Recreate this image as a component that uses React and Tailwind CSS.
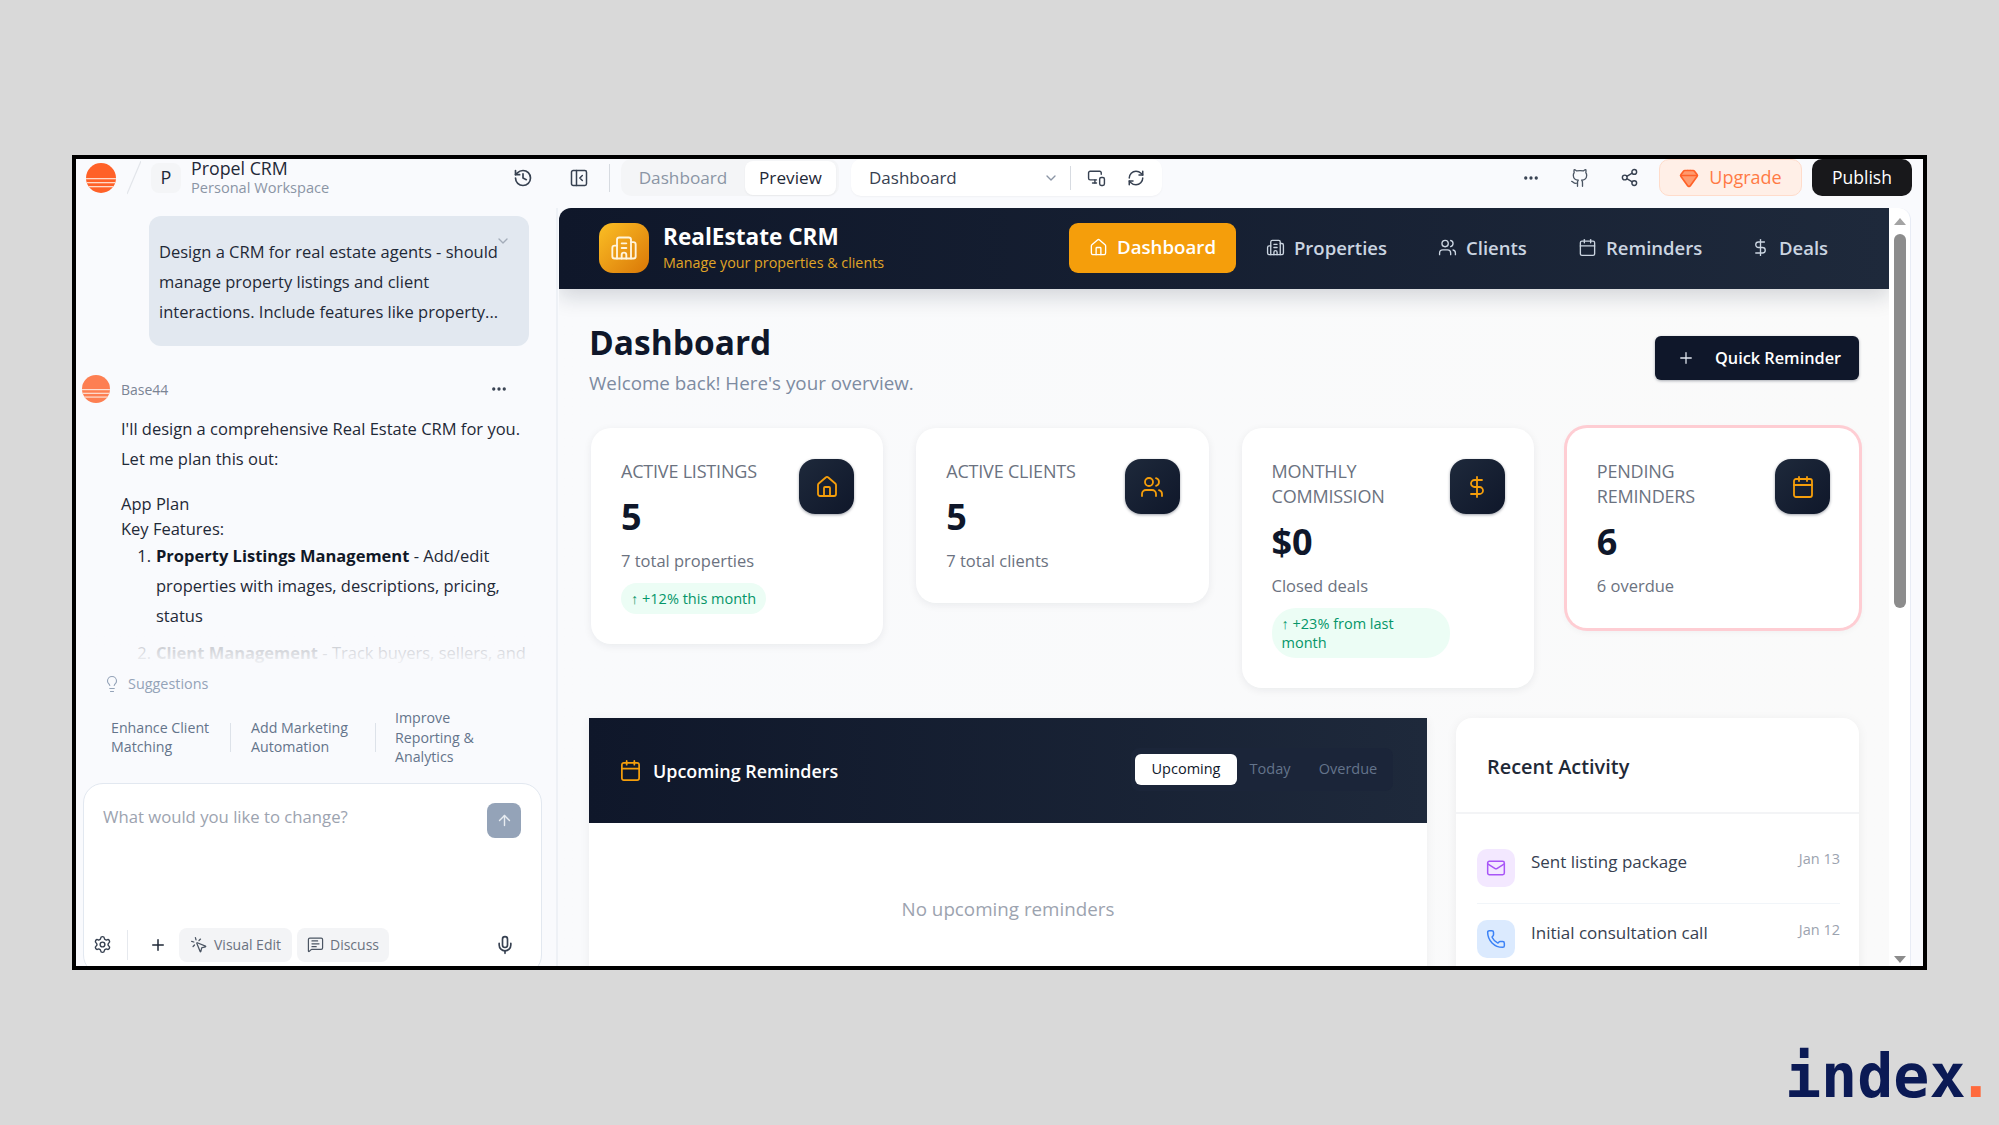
import React from "react";
import {
  History, PanelLeftClose, ChevronDown, MonitorSmartphone, RefreshCw, Ellipsis, Github, Share2, Gem,
  Building2, House, Users, Calendar, DollarSign, Plus, Mail, Phone, Lightbulb, ArrowUp, Settings,
  MousePointerClick, MessageSquareText, Mic,
} from "lucide-react";

function Sun({ size, id, className = "" }) {
  return (
    <svg width={size} height={size} viewBox="0 0 30 30" className={className}>
      <defs>
        <clipPath id={id}><circle cx="15" cy="15" r="15" /></clipPath>
      </defs>
      <g clipPath={`url(#${id})`}>
        <rect width="30" height="30" fill="#ff6128" />
        <rect y="15" width="30" height="1.3" fill="#ffd9c8" />
        <rect y="19" width="30" height="1.3" fill="#ffd9c8" />
        <rect y="23" width="30" height="1.3" fill="#ffd9c8" />
      </g>
    </svg>
  );
}

function StatCard({ label, value, sub, badge, Icon, alert }) {
  return (
    <div className={`bg-white rounded-[20px] pt-[31px] pb-[30px] pl-[30px] pr-[29px] flex shadow-[0_2px_8px_rgba(15,23,42,0.07)] ${alert ? "ring-[3px] ring-[#fecdd3]" : ""}`}>
      <div className="flex-1 min-w-0">
        <div className="text-[18px] leading-[25px] font-normal uppercase tracking-[-0.2px] text-[#6b7280] pr-[2px]">{label}</div>
        <div className="mt-[13px] text-[36px] leading-[40px] font-bold text-[#0f172a]">{value}</div>
        <div className="mt-[12px] text-[16.5px] leading-[24px] text-[#6b7280]">{sub}</div>
        {badge && (
          <div className="mt-[10px] inline-block bg-[#ecfdf5] text-[#059669] text-[14.5px] leading-[19px] px-[10px] py-[6px] rounded-[24px]">
            ↑ {badge}
          </div>
        )}
      </div>
      <div className="w-[55px] h-[55px] shrink-0 rounded-2xl bg-gradient-to-br from-[#1e293b] to-[#0f172a] flex items-center justify-center shadow-[0_1px_3px_rgba(15,23,42,0.4)]">
        <Icon size={24} strokeWidth={1.8} className="text-[#f59e0b]" />
      </div>
    </div>
  );
}

function NavItem({ Icon, label, w }) {
  return (
    <div className={`flex items-center gap-[9px] text-[#cbd5e1] text-[18.5px] font-semibold ${w}`}>
      <Icon size={19} strokeWidth={1.7} />
      <span>{label}</span>
    </div>
  );
}

function Activity({ Icon, title, date, box, fg, border }) {
  return (
    <div className={`flex items-start pb-[16px] mb-[16px] ${border ? "border-b border-[#f1f5f9]" : ""}`}>
      <div className={`w-[38px] h-[38px] rounded-[10px] flex items-center justify-center shrink-0 ${box}`}>
        <Icon size={20} strokeWidth={1.8} className={fg} />
      </div>
      <div className="ml-[16px] flex-1 text-[17px] leading-[26px] font-medium text-[#374151]">{title}</div>
      <div className="text-[14.5px] leading-[20px] text-[#9ca3af]">{date}</div>
    </div>
  );
}

export default function App() {
  return (
    <div className="w-[1999px] h-[1125px] bg-[#d9d9d9] overflow-hidden pt-[155px] font-['Open_Sans',sans-serif]">
      <div className="ml-[72px] w-[1855px] h-[815px] border-4 border-black bg-[#f9fafd] flex flex-col overflow-hidden">
        {/* top bar */}
        <header className="h-[49px] shrink-0 pb-[12px] flex items-center">
          <div className="w-[457px] pl-[10px] flex items-center shrink-0">
            <Sun size={30} id="sunA" />
            <svg width="14" height="34" viewBox="0 0 14 34" className="ml-[11px]"><path d="M14 0 L0 33" stroke="#e2e5ea" strokeWidth="1.2" /></svg>
            <div className="ml-[10px] w-[30px] h-[30px] rounded-lg bg-[#f4f5f7] flex items-center justify-center text-[18px] text-[#1f2937]">P</div>
            <div className="ml-[10px] flex-1">
              <div className="text-[17.8px] leading-[19px] font-medium text-[#1f2937]">Propel CRM</div>
              <div className="text-[14.6px] leading-[18px] text-[#8b95a5]">Personal Workspace</div>
            </div>
            <History size={20} strokeWidth={2} className="text-[#374151]" />
          </div>
          <PanelLeftClose size={20} strokeWidth={1.8} className="ml-[36px] text-[#374151]" />
          <div className="ml-[20px] w-px h-[28px] bg-[#d7dbe1]" />
          <div className="ml-[11px] w-[218px] h-[37px] rounded-[10px] bg-[#f4f5f7] flex items-center">
            <div className="w-[124px] text-center text-[17.2px] text-[#8b95a5]">Dashboard</div>
            <div className="w-[91px] h-[34px] rounded-lg bg-white flex items-center justify-center text-[17.2px] text-[#1f2937] shadow-[0_1px_2px_rgba(0,0,0,0.05)]">Preview</div>
          </div>
          <div className="ml-[12px] w-[311px] h-[37px] rounded-[10px] bg-white flex items-center pl-[18px] shadow-[0_1px_2px_rgba(0,0,0,0.04)]">
            <span className="w-[174px] text-[17px] text-[#374151]">Dashboard</span>
            <ChevronDown size={16} className="text-[#8b95a5]" />
            <div className="ml-[11px] w-px h-[24px] bg-[#d7dbe1]" />
            <MonitorSmartphone size={19} strokeWidth={1.8} className="ml-[16px] text-[#374151]" />
            <RefreshCw size={18} strokeWidth={2} className="ml-[21px] text-[#374151]" />
          </div>
          <div className="ml-auto flex items-center pr-[11px]">
            <Ellipsis size={18} strokeWidth={2.4} className="text-[#374151]" />
            <Github size={20} strokeWidth={1.6} className="ml-[30px] text-[#4b5563]" />
            <Share2 size={19} strokeWidth={1.8} className="ml-[30px] text-[#374151]" />
            <div className="ml-[20px] w-[143px] h-[37px] rounded-[10px] bg-[#ffefe7] border border-[#ffdccb] flex items-center justify-center gap-[10px] text-[#ff7a45] text-[18px]">
              <Gem size={20} strokeWidth={2} className="text-[#ff6128] fill-[#ff9a6e]" />
              <span>Upgrade</span>
            </div>
            <div className="ml-[10px] w-[100px] h-[37px] rounded-[10px] bg-[#18181b] flex items-center justify-center text-white text-[17.5px] font-medium">Publish</div>
          </div>
        </header>

        <div className="flex flex-1 min-h-0">
          {/* chat */}
          <aside className="w-[482px] shrink-0 border-r-2 border-[#eef1f6] flex flex-col overflow-hidden">
            <div className="relative h-[460px] shrink-0 overflow-hidden">
              <div className="relative ml-[73px] mt-[8px] w-[380px] h-[130px] rounded-xl bg-[#e2e8f0] pl-[10px] pr-[22px] pt-[21px] text-[16.5px] leading-[30px] text-[#1f2937]">
                Design a CRM for real estate agents - should manage property listings and client interactions. Include features like property...
                <ChevronDown size={16} className="absolute right-[18px] top-[17px] text-[#a3acb9]" />
              </div>
              <div className="mt-[29px] pl-[6px] pr-[48px] flex items-center">
                <Sun size={28} id="sunB" className="opacity-80" />
                <span className="ml-[11px] text-[14px] text-[#7b8494]">Base44</span>
                <Ellipsis size={18} strokeWidth={2.4} className="ml-auto text-[#374151]" />
              </div>
              <div className="mt-[11px] pl-[45px] pr-[30px] text-[16.5px] text-[#1f2937]">
                <p className="leading-[30px]">I'll design a comprehensive Real Estate CRM for you. Let me plan this out:</p>
                <p className="mt-[17px] leading-[25px]">App Plan</p>
                <p className="leading-[25px]">Key Features:</p>
                <ol className="leading-[30px]">
                  <li className="flex">
                    <span className="w-[35px] text-right pr-[5px]">1.</span>
                    <span className="flex-1"><b className="font-bold text-[#111827]">Property Listings Management</b> - Add/edit properties with images, descriptions, pricing, status</span>
                  </li>
                  <li className="flex mt-[7px]">
                    <span className="w-[35px] text-right pr-[5px]">2.</span>
                    <span className="flex-1"><b className="font-bold text-[#111827]">Client Management</b> - Track buyers, sellers, and</span>
                  </li>
                </ol>
              </div>
              <div className="absolute left-0 right-0 bottom-0 h-[44px] bg-gradient-to-b from-transparent via-[#f9fafd]/80 to-[#f9fafd]" />
            </div>

            <div className="mt-[6px] pl-[27px] flex items-center text-[14.4px] leading-[20px] text-[#94a3b8]">
              <Lightbulb size={18} strokeWidth={1.5} />
              <span className="ml-[7px]">Suggestions</span>
            </div>
            <div className="mt-[14px] pl-[35px] flex items-center text-[14.2px] leading-[19.5px] text-[#64748b] h-[60px]">
              <div className="w-[119px]">Enhance Client<br />Matching</div>
              <div className="w-px h-[29px] bg-[#dde2e9]" />
              <div className="ml-[20px] w-[124px]">Add Marketing<br />Automation</div>
              <div className="w-px h-[29px] bg-[#dde2e9]" />
              <div className="ml-[19px]">Improve<br />Reporting &amp;<br />Analytics</div>
            </div>
            <div className="mt-[16px] ml-[7px] w-[459px] h-[192px] shrink-0 rounded-[20px] bg-white border border-[#e2e8f0] px-[20px] pt-[19px]">
              <div className="flex items-start">
                <div className="flex-1 -ml-[1px] text-[16.7px] leading-[28px] text-[#9ca3af]">What would you like to change?</div>
                <div className="w-[34px] h-[35px] rounded-lg bg-[#94a3b8] flex items-center justify-center">
                  <ArrowUp size={17} strokeWidth={2} className="text-[#e8ecf1]" />
                </div>
              </div>
              <div className="mt-[90px] -ml-[11px] mr-[6px] flex items-center">
                <Settings size={19} strokeWidth={1.8} className="text-[#374151]" />
                <div className="ml-[15px] w-px h-[30px] bg-[#e6e9ee]" />
                <Plus size={18} strokeWidth={2} className="ml-[21px] text-[#1f2937]" />
                <div className="ml-[12px] w-[113px] h-[34px] rounded-lg bg-[#f3f4f6] flex items-center justify-center gap-[6px] text-[14px] text-[#6b7280]">
                  <MousePointerClick size={18} strokeWidth={1.7} className="text-[#4b5563]" />
                  <span>Visual Edit</span>
                </div>
                <div className="ml-[5px] w-[92px] h-[34px] rounded-lg bg-[#f3f4f6] flex items-center justify-center gap-[6px] text-[14px] text-[#6b7280]">
                  <MessageSquareText size={17} strokeWidth={1.7} className="text-[#4b5563]" />
                  <span>Discuss</span>
                </div>
                <Mic size={20} strokeWidth={2} className="ml-auto text-[#374151]" />
              </div>
            </div>
          </aside>

          {/* preview */}
          <main className="flex-1 min-w-0 mr-[12px] ml-px flex overflow-hidden rounded-tl-xl">
            <div className="flex-1 min-w-0 bg-gradient-to-r from-[#f9fafc] to-[#fafafa] overflow-hidden">
              <nav className="h-[81px] pb-[2px] bg-gradient-to-r from-[#0f172a] to-[#1e293b] flex items-center pl-[40px] shadow-[0_8px_20px_rgba(15,23,42,0.16)] relative">
                <div className="w-[50px] h-[50px] rounded-[14px] bg-gradient-to-br from-[#fbbf24] to-[#d97706] flex items-center justify-center">
                  <Building2 size={28} strokeWidth={1.6} className="text-[#fff4dc]" />
                </div>
                <div className="ml-[14px] w-[406px]">
                  <div className="text-[22.6px] leading-[29px] font-bold text-white">RealEstate CRM</div>
                  <div className="mt-[1px] text-[14.3px] leading-[22px] text-[#e0a526]">Manage your properties &amp; clients</div>
                </div>
                <div className="w-[167px] h-[50px] rounded-[9px] bg-[#f59e0b] flex items-center justify-center gap-[9px] text-white text-[18.7px] font-semibold">
                  <House size={19} strokeWidth={1.7} />
                  <span>Dashboard</span>
                </div>
                <NavItem Icon={Building2} label="Properties" w="ml-[30px] w-[172px]" />
                <NavItem Icon={Users} label="Clients" w="w-[140px]" />
                <NavItem Icon={Calendar} label="Reminders" w="w-[173px]" />
                <NavItem Icon={DollarSign} label="Deals" />
              </nav>

              <div className="pt-[33px] pl-[30px] pr-[30px]">
                <div className="flex items-start justify-between">
                  <div>
                    <h1 className="text-[33.5px] leading-[40px] font-bold text-[#0f172a]">Dashboard</h1>
                    <p className="mt-[7px] text-[18.8px] leading-[28px] text-[#7d8ba1]">Welcome back! Here's your overview.</p>
                  </div>
                  <div className="mt-[14px] w-[204px] h-[44px] rounded-md bg-[#0f172a] flex items-center pl-[22px] text-white text-[16.3px] font-semibold shadow-[0_1px_3px_rgba(15,23,42,0.35)]">
                    <Plus size={18} strokeWidth={1.7} className="text-[#e2e8f0]" />
                    <span className="ml-[20px]">Quick Reminder</span>
                  </div>
                </div>

                <div className="mt-[31px] ml-[2px] w-[1268px] grid grid-cols-4 gap-[33px] items-start">
                  <StatCard label="Active Listings" value="5" sub="7 total properties" badge="+12% this month" Icon={House} />
                  <StatCard label="Active Clients" value="5" sub="7 total clients" Icon={Users} />
                  <StatCard label="Monthly Commission" value="$0" sub="Closed deals" badge="+23% from last month" Icon={DollarSign} />
                  <StatCard label="Pending Reminders" value="6" sub="6 overdue" Icon={Calendar} alert />
                </div>

                <div className="mt-[30px] flex items-start gap-[29px]">
                  <section className="w-[838px] bg-white shadow-[0_2px_10px_rgba(15,23,42,0.06)] h-[300px]">
                    <div className="h-[105px] bg-gradient-to-r from-[#0f172a] to-[#1e293b] flex items-center pl-[30px]">
                      <Calendar size={23} strokeWidth={1.8} className="text-[#f59e0b]" />
                      <span className="ml-[11px] mt-[2px] text-[17.9px] font-semibold text-white">Upcoming Reminders</span>
                      <div className="ml-auto mr-[34px] -mt-[3px] w-[262px] h-[43px] rounded-lg bg-[#1b2539] flex items-center pl-[4px] text-[14.5px]">
                        <div className="w-[102px] h-[31px] rounded-md bg-white text-[#0f172a] font-medium flex items-center justify-center">Upcoming</div>
                        <div className="w-[66px] text-center text-[#64748b]">Today</div>
                        <div className="w-[90px] text-center text-[#64748b]">Overdue</div>
                      </div>
                    </div>
                    <div className="pt-[72px] text-center text-[18.8px] leading-[28px] text-[#9ca3af]">No upcoming reminders</div>
                  </section>
                  <section className="w-[403px] bg-white rounded-t-2xl shadow-[0_2px_12px_rgba(15,23,42,0.06)] h-[300px]">
                    <div className="h-[96px] pt-[34px] pl-[31px] border-b-2 border-[#f3f4f6] text-[19.9px] leading-[30px] font-semibold text-[#1f2937]">Recent Activity</div>
                    <div className="pt-[35px] pl-[21px] pr-[19px]">
                      <Activity Icon={Mail} title="Sent listing package" date="Jan 13" box="bg-[#f3e8ff]" fg="text-[#a855f7]" border />
                      <Activity Icon={Phone} title="Initial consultation call" date="Jan 12" box="bg-[#dbeafe]" fg="text-[#3b82f6]" />
                    </div>
                  </section>
                </div>
              </div>
            </div>

            {/* scrollbar */}
            <div className="w-[22px] shrink-0 bg-white rounded-tr-xl border-r border-[#e8ecf5] flex flex-col items-center">
              <svg width="12" height="7" viewBox="0 0 12 7" className="mt-[10px]"><path d="M6 0 L12 7 L0 7 Z" fill="#a3a3a3" /></svg>
              <div className="mt-[9px] w-[12px] h-[374px] rounded-md bg-[#8c8c8c]" />
              <svg width="12" height="7" viewBox="0 0 12 7" className="mt-auto mb-[3px]"><path d="M0 0 L12 0 L6 7 Z" fill="#8c8c8c" /></svg>
            </div>
          </main>
        </div>
      </div>
      <div className="mt-[74px] pl-[1785px] leading-[64px] text-[60px] font-bold text-[#0b1a55] font-['DejaVu_Sans_Mono',monospace]">
        index<span className="-ml-[8px] text-[#ff6a3d]">.</span>
      </div>
    </div>
  );
}
